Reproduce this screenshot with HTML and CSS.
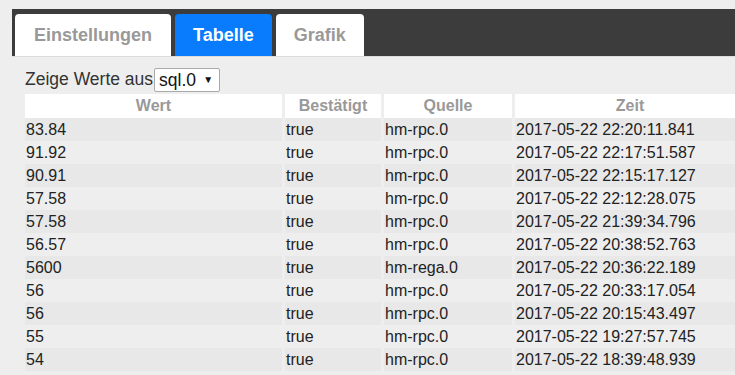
FILE: index.html
```html
<!DOCTYPE html>
<html lang="de">
<head>
    <meta charset="UTF-8">
    <meta name="viewport" content="width=device-width, initial-scale=1.0">
    <title>Verlauf</title>
    <link rel="stylesheet" href="styles.css">
</head>
<body>
    <div class="tabs-bar">
        <a class="tab" href="#">Einstellungen</a>
        <a class="tab active" href="#">Tabelle</a>
        <a class="tab" href="#">Grafik</a>
    </div>

    <div class="content">
        <div class="source-row">
            <span>Zeige Werte aus</span><span class="select-wrap"><select class="source-select">
                <option>sql.0</option>
            </select><span class="select-arrow">&#9660;</span></span>
        </div>

        <table class="history">
            <colgroup>
                <col class="col-value">
                <col class="col-ack">
                <col class="col-from">
                <col class="col-time">
            </colgroup>
            <thead>
                <tr>
                    <th>Wert</th>
                    <th>Bestätigt</th>
                    <th>Quelle</th>
                    <th>Zeit</th>
                </tr>
            </thead>
            <tbody>
                <tr><td>83.84</td><td>true</td><td>hm-rpc.0</td><td>2017-05-22 22:20:11.841</td></tr>
                <tr><td>91.92</td><td>true</td><td>hm-rpc.0</td><td>2017-05-22 22:17:51.587</td></tr>
                <tr><td>90.91</td><td>true</td><td>hm-rpc.0</td><td>2017-05-22 22:15:17.127</td></tr>
                <tr><td>57.58</td><td>true</td><td>hm-rpc.0</td><td>2017-05-22 22:12:28.075</td></tr>
                <tr><td>57.58</td><td>true</td><td>hm-rpc.0</td><td>2017-05-22 21:39:34.796</td></tr>
                <tr><td>56.57</td><td>true</td><td>hm-rpc.0</td><td>2017-05-22 20:38:52.763</td></tr>
                <tr><td>5600</td><td>true</td><td>hm-rega.0</td><td>2017-05-22 20:36:22.189</td></tr>
                <tr><td>56</td><td>true</td><td>hm-rpc.0</td><td>2017-05-22 20:33:17.054</td></tr>
                <tr><td>56</td><td>true</td><td>hm-rpc.0</td><td>2017-05-22 20:15:43.497</td></tr>
                <tr><td>55</td><td>true</td><td>hm-rpc.0</td><td>2017-05-22 19:27:57.745</td></tr>
                <tr><td>54</td><td>true</td><td>hm-rpc.0</td><td>2017-05-22 18:39:48.939</td></tr>
            </tbody>
        </table>
    </div>
</body>
</html>
```

FILE: styles.css
```css
body {
    font-family: "Liberation Sans", Arial, sans-serif;
    font-size: 16px;
    margin: 0;
    padding: 0;
    background-color: #eeeeee;
    color: #222;
    overflow: hidden;
}
.tabs-bar {
    display: flex;
    gap: 4px;
    margin: 9px 0 0 12px;
    padding: 5px 3px 0;
    background-color: #3c3c3c;
    border-bottom: 1px solid #dcdcdc;
}
.tab {
    display: block;
    height: 42px;
    line-height: 42px;
    padding: 0 18px;
    background: #fff;
    border-radius: 4px 4px 0 0;
    color: #999;
    font-size: 18px;
    font-weight: bold;
    text-decoration: none;
}
.tab:first-child {
    padding: 0 19px;
}
.tab.active {
    background-color: #087cfd;
    color: #fff;
}
.content {
    padding: 10px 0 0 25px;
}
.source-row {
    display: flex;
    align-items: center;
    height: 25px;
    font-size: 17.5px;
    color: #333;
}
.select-wrap {
    position: relative;
    display: inline-block;
    margin-left: 1px;
}
.source-select {
    appearance: none;
    -webkit-appearance: none;
    width: 66px;
    height: 24px;
    padding: 0 0 0 4px;
    border: 1px solid #a9a9a9;
    border-radius: 2px;
    background: #fff;
    font-family: inherit;
    font-size: 17.5px;
    color: #111;
}
.select-arrow {
    position: absolute;
    right: 7px;
    top: 6px;
    font-size: 10px;
    color: #111;
    pointer-events: none;
}
.history {
    table-layout: fixed;
    width: 723px;
    margin: 2px 0 0 -3px;
    border-collapse: separate;
    border-spacing: 3px 0;
}
.col-value { width: 257px; }
.col-ack { width: 96px; }
.col-from { width: 128px; }
.col-time { width: 230px; }
.history th {
    height: 24px;
    padding: 0;
    background: #fff;
    color: #999;
    font-weight: bold;
    text-align: center;
}
.history td {
    height: 23px;
    padding: 0 1px;
    white-space: nowrap;
}
.history tbody tr:nth-child(odd) td {
    background-color: #e8e8e8;
}
```
